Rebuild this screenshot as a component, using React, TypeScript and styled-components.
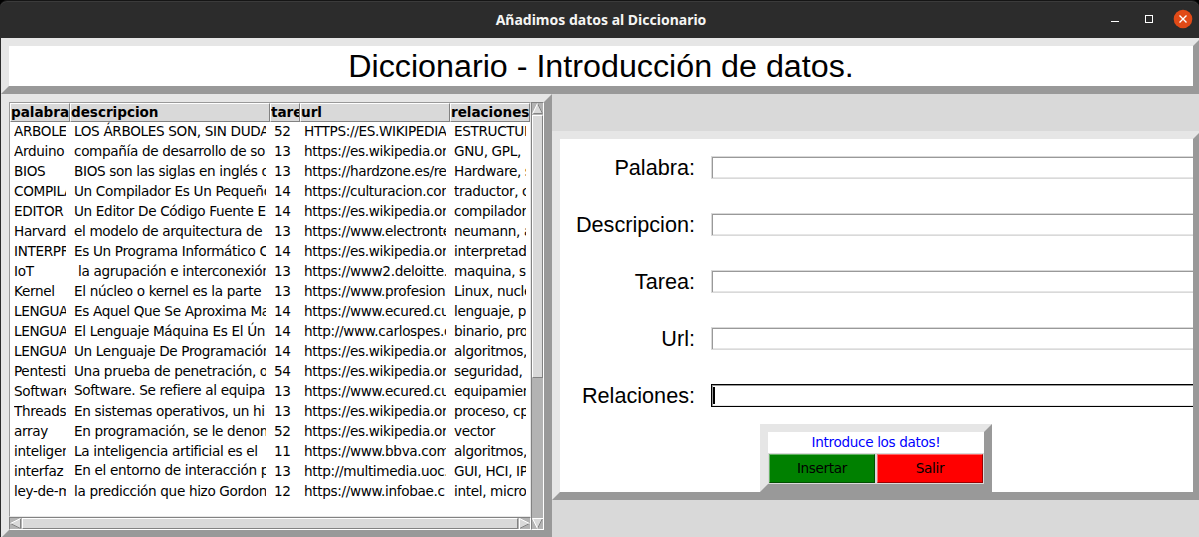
import React from "react";
import styled, { createGlobalStyle, css } from "styled-components";

const GlobalStyle = createGlobalStyle`
  html, body { margin: 0; background: #2c2c2c; }
  * { box-sizing: border-box; }
`;

const raised = css`
  border: 8px solid;
  border-color: #e6e6e6 #999999 #999999 #e6e6e6;
`;

const sans = css`
  font-family: "DejaVu Sans", sans-serif;
  font-size: 13.6px;
  letter-spacing: -0.34px;
`;

const Window = styled.div`
  width: 1199px;
  height: 537px;
  overflow: hidden;
  display: flex;
  flex-direction: column;
  background: #000;
`;

const TitleBar = styled.header`
  flex: none;
  height: 38px;
  display: grid;
  grid-template-columns: 1fr auto 1fr;
  align-items: start;
  background: #2c2c2c;
  border-top: 1px solid #151515;
  box-shadow: inset 0 1px 0 #3b3b3b;
  border-radius: 7px 7px 0 0;
`;

const WindowTitle = styled.div`
  grid-column: 2;
  padding: 9px 0 0 3px;
  color: #f5f5f3;
  font: bold 14px/19px "Noto Sans", sans-serif;
  white-space: pre;
`;

const WindowControls = styled.div`
  justify-self: end;
  display: flex;
  padding: 8px 6px 0 0;
  svg { display: block; }
`;

const Client = styled.main`
  flex: none;
  width: 1200px;
  height: 500px;
  margin-left: 1px;
  background: #d9d9d9;
  box-shadow: -1px 0 0 #2c2c2c;
`;

const Banner = styled.h1`
  ${raised}
  margin: 0;
  height: 56px;
  background: #fff;
  color: #000;
  text-align: center;
  font: 32.25px/40px "Liberation Sans", Arial, sans-serif;
  white-space: pre;
`;

const Body = styled.div`
  display: flex;
  align-items: flex-start;
`;

const TreePanel = styled.section`
  ${raised}
  flex: none;
  width: 551px;
  height: 444px;
  display: grid;
  grid-template-columns: 522px 13px;
  grid-template-rows: 415px 13px;
`;

const Table = styled.div`
  border: 1px solid;
  border-color: #999 #e6e6e6 #e6e6e6 #999;
  background: #fff;
  overflow: hidden;
`;

const columns = "60px 200px 30px 150px 80px";

const HeadRow = styled.div`
  display: grid;
  grid-template-columns: ${columns};
  height: 19px;
`;

const HeadCell = styled.div`
  ${sans}
  font-weight: bold;
  letter-spacing: -0.04px;
  line-height: 16px;
  overflow: hidden;
  white-space: pre;
  background: #d9d9d9;
  border: 1px solid;
  border-color: #fff #828282 #828282 #fff;
`;

const Row = styled.div`
  display: grid;
  grid-template-columns: ${columns};
  height: 20px;
`;

const Cell = styled.div<{ $raise?: boolean }>`
  ${sans}
  line-height: ${(p) => (p.$raise ? 16 : 18)}px;
  margin: 0 4px;
  overflow: hidden;
  white-space: pre;
  color: #000;
`;

const Scrollbar = styled.div<{ $vertical?: boolean }>`
  display: flex;
  flex-direction: ${(p) => (p.$vertical ? "column" : "row")};
  grid-row: ${(p) => (p.$vertical ? "1 / 3" : "2")};
  grid-column: ${(p) => (p.$vertical ? "2" : "1")};
  border: 1px solid;
  border-color: #828282 #fff #fff #828282;
  background: #b3b3b3;
  svg { display: block; flex: none; }
`;

const Thumb = styled.div<{ $length: number }>`
  flex: 0 0 ${(p) => p.$length}px;
  background: #d9d9d9;
  border: 1px solid;
  border-color: #fff #828282 #828282 #fff;
`;

const Spacer = styled.div<{ $size?: number }>`
  flex: ${(p) => (p.$size ? `0 0 ${p.$size}px` : "1")};
`;

const FormPanel = styled.section`
  ${raised}
  flex: none;
  width: 649px;
  height: 369px;
  margin-top: 37px;
  padding-top: 17px;
  background: #fff;
  display: flex;
  flex-direction: column;
  justify-content: space-between;
  overflow: hidden;
`;

const Fields = styled.div`
  display: grid;
  grid-template-columns: 135px 600px;
  grid-auto-rows: 23px;
  column-gap: 16px;
  row-gap: 34px;
`;

const Label = styled.label`
  text-align: right;
  font: 21.65px/23px "Liberation Sans", Arial, sans-serif;
  color: #000;
  white-space: pre;
`;

const Entry = styled.div<{ $focused?: boolean }>`
  border: 1px solid ${(p) => (p.$focused ? "#000" : "#d9d9d9")};
  background: #fff;
  padding: 1px 0 0 0;
  box-shadow: inset 1px 1px 0 #999, inset -1px -1px 0 #e6e6e6;
`;

const Caret = styled.div`
  width: 2px;
  height: 17px;
  margin: 1px 0 0 1px;
  background: #000;
`;

const ActionBox = styled.div`
  ${raised}
  width: 232px;
  height: 68px;
  margin-left: 200px;
  display: grid;
  grid-template-columns: 1fr 1fr;
  grid-template-rows: 21px 31px;
`;

const Message = styled.div`
  ${sans}
  grid-column: 1 / 3;
  background: #fff;
  color: #0000ff;
  line-height: 20px;
  text-align: center;
  white-space: pre;
`;

const ActionButton = styled.button<{ $fill: string; $light: string; $dark: string }>`
  ${sans}
  padding: 0 0 1px;
  margin: 1px;
  color: #000;
  background: ${(p) => p.$fill};
  border: 1px solid;
  border-color: ${(p) => `${p.$light} ${p.$dark} ${p.$dark} ${p.$light}`};
  outline: 1px solid #d9d9d9;
  border-radius: 0;
`;

const fields = ["Palabra:", "Descripcion:", "Tarea:", "Url:", "Relaciones:"];
const heads = ["palabra", "descripcion", "tarea", "url", "relaciones"];

const rows: string[][] = [
  ["ARBOLE", "LOS ÁRBOLES SON, SIN DUDA", "52", "HTTPS://ES.WIKIPEDIA", "ESTRUCTUR"],
  ["Arduino", "compañía de desarrollo de so", "13", "https://es.wikipedia.org", "GNU, GPL,"],
  ["BIOS", "BIOS son las siglas en inglés d", "13", "https://hardzone.es/re", "Hardware, s"],
  ["COMPILA", "Un Compilador Es Un Pequeño", "14", "https://culturacion.com", "traductor, c"],
  ["EDITOR", "Un Editor De Código Fuente E", "14", "https://es.wikipedia.org", "compilador"],
  ["Harvard", "el modelo de arquitectura de ", "13", "https://www.electronte", "neumann, a"],
  ["INTERPR", "Es Un Programa Informático C", "14", "https://es.wikipedia.org", "interpretad"],
  ["IoT", " la agrupación e interconexión", "13", "https://www2.deloitte.", "maquina, s"],
  ["Kernel", "El núcleo o kernel es la parte ", "13", "https://www.profesion", "Linux, nucle"],
  ["LENGUA", "Es Aquel Que Se Aproxima Ma", "14", "https://www.ecured.cu", "lenguaje, p"],
  ["LENGUA", "El Lenguaje Máquina Es El Ún", "14", "http://www.carlospes.c", "binario, pro"],
  ["LENGUA", "Un Lenguaje De Programación", "14", "https://es.wikipedia.org", "algoritmos, "],
  ["Pentesti", "Una prueba de penetración, o", "54", "https://es.wikipedia.org", "seguridad, "],
  ["Software", "Software. Se refiere al equipa", "13", "https://www.ecured.cu", "equipamien"],
  ["Threads", "En sistemas operativos, un hi", "13", "https://es.wikipedia.org", "proceso, cp"],
  ["array", "En programación, se le denom", "52", "https://es.wikipedia.org", "vector"],
  ["inteligen", "La inteligencia artificial es el ", "11", "https://www.bbva.com", "algoritmos, "],
  ["interfaz", "En el entorno de interacción p", "13", "http://multimedia.uoc.", "GUI, HCI, IP"],
  ["ley-de-m", "la predicción que hizo Gordon", "12", "https://www.infobae.c", "intel, micro"],
];

const raisedRows = [13, 17];

function Arrow({ turn }: { turn: "up" | "down" | "left" | "right" }) {
  const shapes = {
    up: { fill: "0,11 5.5,0 11,11", light: "M0.5 11L5.5 0.5", dark: "M5.5 0.5L10.5 10.5H0" },
    down: { fill: "0,0 11,0 5.5,11", light: "M11 0.5H0.5L5.5 10.5", dark: "M5.5 10.5L10.5 0.5" },
    left: { fill: "11,0 11,11 0,5.5", light: "M0.5 5.5L10.5 0.5", dark: "M10.5 0.5V10.5L0.5 5.5" },
    right: { fill: "0,0 11,5.5 0,11", light: "M0.5 11V0.5L10.5 5.5", dark: "M10.5 5.5L0.5 10.5" },
  }[turn];
  return (
    <svg width="11" height="11" viewBox="0 0 11 11">
      <polygon points={shapes.fill} fill="#d9d9d9" />
      <path d={shapes.dark} fill="none" stroke="#828282" />
      <path d={shapes.light} fill="none" stroke="#fff" />
    </svg>
  );
}

export default function App() {
  return (
    <Window>
      <GlobalStyle />
      <TitleBar>
        <WindowTitle>Añadimos datos al Diccionario</WindowTitle>
        <WindowControls>
          <svg width="88" height="20" viewBox="0 0 88 20">
            <path d="M6 12.5H14" stroke="#fff" />
            <rect x="40.5" y="6.5" width="7" height="7" fill="none" stroke="#fff" />
            <circle cx="78" cy="10" r="9.3" fill="#e14a17" />
            <path d="M74.5 6.5L81.5 13.5M81.5 6.5L74.5 13.5" stroke="#fff" strokeWidth="1.4" />
          </svg>
        </WindowControls>
      </TitleBar>
      <Client>
        <Banner>Diccionario - Introducción de datos.</Banner>
        <Body>
          <TreePanel>
            <Table>
              <HeadRow>
                {heads.map((h) => (
                  <HeadCell key={h}>{h}</HeadCell>
                ))}
              </HeadRow>
              {rows.map((r, i) => (
                <Row key={i}>
                  {r.map((c, j) => (
                    <Cell key={j} $raise={j === 1 && raisedRows.includes(i)}>
                      {c}
                    </Cell>
                  ))}
                </Row>
              ))}
            </Table>
            <Scrollbar $vertical>
              <Arrow turn="up" />
              <Spacer $size={1} />
              <Thumb $length={263} />
              <Spacer />
              <Arrow turn="down" />
            </Scrollbar>
            <Scrollbar>
              <Arrow turn="left" />
              <Spacer $size={1} />
              <Thumb $length={496} />
              <Spacer />
              <Arrow turn="right" />
            </Scrollbar>
          </TreePanel>
          <FormPanel>
            <Fields>
              {fields.map((f, i) => (
                <React.Fragment key={f}>
                  <Label>{f}</Label>
                  <Entry $focused={i === 4}>{i === 4 && <Caret />}</Entry>
                </React.Fragment>
              ))}
            </Fields>
            <ActionBox>
              <Message>Introduce los datos!</Message>
              <ActionButton $fill="#008000" $light="#66b366" $dark="#004d00">Insertar</ActionButton>
              <ActionButton $fill="#ff0000" $light="#ff6666" $dark="#990000">Salir</ActionButton>
            </ActionBox>
          </FormPanel>
        </Body>
      </Client>
    </Window>
  );
}
